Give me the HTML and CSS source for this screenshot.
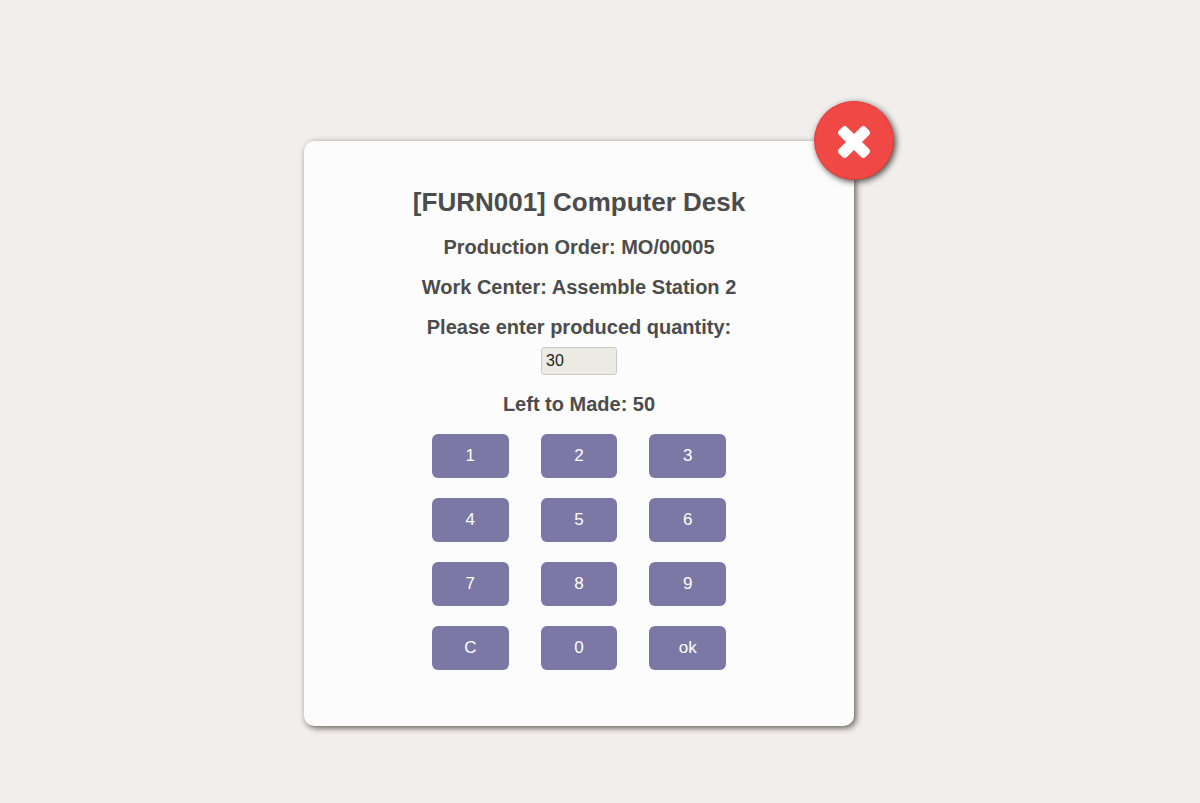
FILE: index.html
```html
<!DOCTYPE html>
<html lang="en">
<head>
<meta charset="utf-8">
<meta name="viewport" content="width=device-width, initial-scale=1">
<title>Produced quantity</title>
<link rel="stylesheet" href="styles.css">
</head>
<body>
<main class="page">
  <form class="card">
    <button class="close" type="button" aria-label="Close">
      <svg class="close-icon" viewBox="276 340 1240 1240" aria-hidden="true"><path fill="currentColor" stroke="currentColor" stroke-width="52" d="M1490 1322q0 40-28 68l-136 136q-28 28-68 28t-68-28l-294-294-294 294q-28 28-68 28t-68-28l-136-136q-28-28-28-68t28-68l294-294-294-294q-28-28-28-68t28-68l136-136q28-28 68-28t68 28l294 294 294-294q28-28 68-28t68 28l136 136q28 28 28 68t-28 68l-294 294 294 294q28 28 28 68z"/></svg>
    </button>
    <h1 class="title">[FURN001] Computer Desk</h1>
    <h2 class="line">Production Order: MO/00005</h2>
    <h2 class="line">Work Center: Assemble Station 2</h2>
    <div class="field">
      <label class="line" for="qty">Please enter produced quantity:</label>
      <input class="qty" id="qty" type="text" value="30">
    </div>
    <h2 class="line">Left to Made: 50</h2>
    <div class="keypad">
      <button class="key" type="button">1</button>
      <button class="key" type="button">2</button>
      <button class="key" type="button">3</button>
      <button class="key" type="button">4</button>
      <button class="key" type="button">5</button>
      <button class="key" type="button">6</button>
      <button class="key" type="button">7</button>
      <button class="key" type="button">8</button>
      <button class="key" type="button">9</button>
      <button class="key" type="button">C</button>
      <button class="key" type="button">0</button>
      <button class="key" type="button">ok</button>
    </div>
  </form>
</main>
</body>
</html>
```

FILE: styles.css
```css
* {
  box-sizing: border-box;
}

body {
  margin: 0;
  background: #f2eeeb;
  color: #4c4c4c;
  font-family: "Liberation Sans", Arial, sans-serif;
}

.page {
  display: flex;
  justify-content: center;
  align-items: flex-start;
  min-height: 100vh;
  padding: 141px 42px 77px 0;
}

.card {
  position: relative;
  display: flex;
  flex-direction: column;
  align-items: center;
  gap: 16px;
  width: 100%;
  max-width: 550px;
  padding: 46px 16px 56px;
  border-radius: 10px;
  background: #fcfcfc;
  box-shadow: 2px 2px 6px #5f5a54;
  text-align: center;
}

.close {
  position: absolute;
  top: -40px;
  right: -40px;
  display: grid;
  place-items: center;
  width: 80px;
  height: 79px;
  padding: 3px 0 0;
  border: 1px solid #e53c3a;
  border-radius: 50%;
  background: #f04945;
  box-shadow: 2px 2px 6px #4c4843;
  color: #fff;
  cursor: pointer;
}

.close-icon {
  width: 32px;
  height: 32px;
}

.title,
.line {
  margin: 0;
  font-weight: bold;
}

.title {
  margin-bottom: 2px;
  font-size: 26px;
  line-height: 30px;
}

.line {
  font-size: 20px;
  line-height: 24px;
}

.field {
  display: flex;
  flex-direction: column;
  align-items: center;
  gap: 8px;
  margin-bottom: 1px;
}

.qty {
  width: 76px;
  height: 28px;
  padding: 0 4px;
  border: 1px solid #cacac2;
  border-radius: 3px;
  background: #ebebe3;
  color: #1f1f1f;
  font: 16px "Liberation Sans", Arial, sans-serif;
}

.keypad {
  display: grid;
  grid-template-columns: repeat(3, 1fr);
  gap: 20px 32px;
  width: 100%;
  max-width: 294px;
  margin-top: 2px;
}

.key {
  height: 44px;
  padding: 0;
  border: 0;
  border-radius: 6px;
  background: #7c78a6;
  color: #fff;
  font: 17px "Liberation Sans", Arial, sans-serif;
  cursor: pointer;
}
```
